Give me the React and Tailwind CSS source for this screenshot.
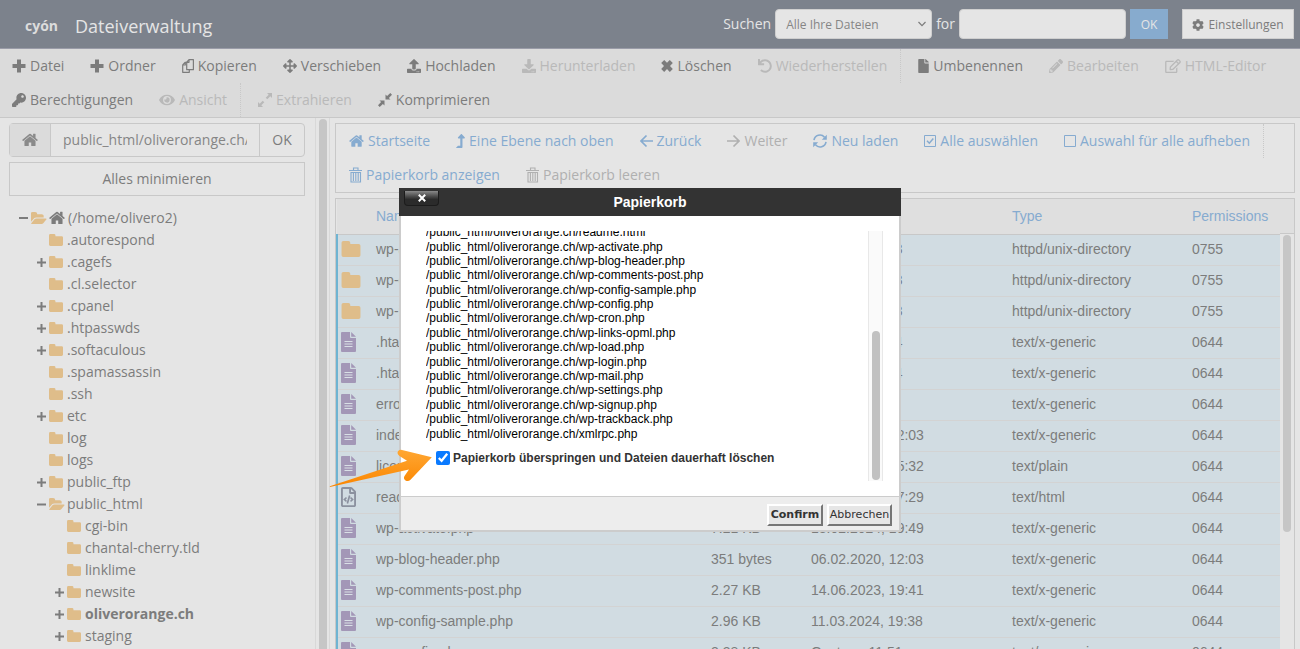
import React, { useState } from 'react';
import {
	FaArrowsAlt,
	FaCog,
	FaDownload,
	FaEye,
	FaFile,
	FaKey,
	FaLevelUpAlt,
	FaPencilAlt,
	FaRegEdit,
	FaRegFileCode,
	FaUndo,
	FaUpload,
} from 'react-icons/fa';

const Svg = ({ box = '0 0 14 14', className = 'w-3.5 h-3.5', children }) => (
	<svg viewBox={box} className={`shrink-0 ${className}`} fill="currentColor" aria-hidden="true">
		{children}
	</svg>
);

const PlusIcon = () => <Svg><path d="M5 .5h4V5h4.500v4H9v4.500H5V9H.5V5H5z" /></Svg>;

const CopyIcon = () => (
	<Svg className="w-3 h-3.5" box="0 0 12 14">
		<g fill="none" stroke="currentColor" strokeWidth="1.2" strokeLinejoin="round">
			<path d="M7 .7h4.400v10H4.700V3.200zM7 .7v2.600H4.700" />
			<path d="M4.700 3.300H3L.7 5.800v7.500h6.600v-2.500M3.300 3.500v2.500H.8" />
		</g>
	</Svg>
);

const CrossIcon = () => (
	<Svg className="w-3 h-3.5" box="0 1 12 12">
		<path d="M3.200 1 6 3.800 8.800 1l3 3L9 7l2.800 2.900-3 3L6 10.100l-2.800 2.800-3-3L3 7 .2 4z" />
	</Svg>
);

const ExtractIcon = () => (
	<Svg>
		<path d="M14 0v5l-1.700-1.700-3 3-1.600-1.600 3-3L9 0zM0 14V9l1.700 1.700 3-3 1.600 1.600-3 3L5 14z" />
	</Svg>
);

const CompressIcon = () => (
	<Svg>
		<path d="M7.500 6.500v-5l1.600 1.600L12.300 0 14 1.700l-3.100 3.200 1.600 1.600zM6.500 7.500v5l-1.600-1.600L1.700 14 0 12.300l3.100-3.200-1.600-1.600z" />
	</Svg>
);

const HomeIcon = ({ className = 'w-4 h-4' }) => (
	<Svg box="64 200 1664 1400" className={className}>
		<path d="M1472 992v480q0 26-19 45t-45 19h-384v-384h-256v384h-384q-26 0-45-19t-19-45v-480q0-1 .5-3t.5-3l575-474 575 474q1 2 1 6zm223-69l-62 74q-8 9-21 11h-3q-13 0-21-7l-692-577-692 577q-12 8-24 7-13-2-21-11l-62-74q-8-10-7-23.500t11-21.500l719-599q32-26 76-26t76 26l244 204v-195q0-14 9-23t23-9h192q14 0 23 9t9 23v408l219 182q10 8 11 21.500t-7 23.500z" />
	</Svg>
);

const ArrowIcon = ({ right }) => (
	<Svg className="w-[13px] h-3.5" box="0 0 13 14">
		<path
			d={right ? 'M0 7h12M6.500 1.500L12 7l-5.500 5.500' : 'M13 7H1M6.500 1.500L1 7l5.500 5.500'}
			fill="none"
			stroke="currentColor"
			strokeWidth="1.7"
		/>
	</Svg>
);

const RefreshIcon = () => (
	<Svg>
		<path d="M1 6.200A6 6 0 0 1 11.500 3.200M13 7.800A6 6 0 0 1 2.500 10.800" fill="none" stroke="currentColor" strokeWidth="1.6" />
		<path d="M13.800.8v5H8.800zM.2 13.200v-5h5z" />
	</Svg>
);

const BoxIcon = ({ checked }) => (
	<Svg className="w-3 h-3.5" box="0 0 12 14">
		<g fill="none" stroke="currentColor" strokeWidth="1">
			<path d="M.5 1.500h11v11H.5z" />
			{checked && <path d="M3 6.800l2.300 2.400L9.300 4.500" strokeWidth="1.500" />}
		</g>
	</Svg>
);

const TrashIcon = () => (
	<Svg className="w-[13px] h-4" box="0 0 13 16">
		<path
			d="M0 3.500h13M4.500 3V1H9v2M2 5.500h9.500V15H2zM4.400 6v8M6.800 6v8M9.200 6v8"
			fill="none"
			stroke="currentColor"
			strokeWidth="1.100"
		/>
	</Svg>
);

const FolderIcon = ({ className = 'w-3.5 h-3' }) => (
	<Svg box="64 128 1664 1408" className={`text-[#dfbd8a] ${className}`}>
		<path d="M1728 608v768q0 160-160 160h-1344q-160 0-160-160v-1088q0-160 160-160h448q160 0 160 160v96h736q160 0 160 160z" />
	</Svg>
);

const FolderOpenIcon = () => (
	<Svg box="0 128 1850 1408" className="w-4 h-3 text-[#dfbd8a]">
		<path d="M1815 952q0 31-31 66l-336 396q-43 51-120.500 86.500t-143.500 35.500h-1088q-34 0-60.500-13t-26.500-43q0-31 31-66l336-396q43-51 120.500-86.500t143.500-35.500h1088q34 0 60.500 13t26.500 43zm-343-344v160h-832q-94 0-197 47.500t-164 119.500l-337 396-5 6q0-4-.5-12.500t-.5-12.500v-960q0-92 66-158t158-66h320q92 0 158 66t66 158v32h544q92 0 158 66t66 158z" />
	</Svg>
);

const FileIcon = () => (
	<Svg box="0 0 15 20" className="w-[15px] h-5 text-[#a397b7]">
		<path d="M0 1q0-1 1-1h8v5q0 1 1 1h5v13q0 1-1 1H1q-1 0-1-1zM10.200 0 15 4.800h-4.800z" />
		<path d="M3.500 9.500h8M3.500 12h8M3.500 14.500h8" stroke="#d9dfe6" strokeWidth="1.100" />
	</Svg>
);

const ICON = 'w-3.5 h-3.5 shrink-0';

const mainActions = [
	{ label: 'Datei', icon: <PlusIcon /> },
	{ label: 'Ordner', icon: <PlusIcon /> },
	{ label: 'Kopieren', icon: <CopyIcon /> },
	{ label: 'Verschieben', icon: <FaArrowsAlt className={ICON} /> },
	{ label: 'Hochladen', icon: <FaUpload className={ICON} /> },
	{ label: 'Herunterladen', icon: <FaDownload className={ICON} />, disabled: true },
	{ label: 'Löschen', icon: <CrossIcon /> },
	{ label: 'Wiederherstellen', icon: <FaUndo className={ICON} />, disabled: true, divider: true },
	{ label: 'Umbenennen', icon: <FaFile className="w-[11px] h-3.5 shrink-0" /> },
	{ label: 'Bearbeiten', icon: <FaPencilAlt className={ICON} />, disabled: true },
	{ label: 'HTML-Editor', icon: <FaRegEdit className="w-4 h-3.5 shrink-0" />, disabled: true },
	{ label: 'Berechtigungen', icon: <FaKey className={ICON} /> },
	{ label: 'Ansicht', icon: <FaEye className="w-4 h-3.5 shrink-0" />, disabled: true, divider: true },
	{ label: 'Extrahieren', icon: <ExtractIcon />, disabled: true },
	{ label: 'Komprimieren', icon: <CompressIcon /> },
];

const navActions = [
	{ label: 'Startseite', icon: <HomeIcon className="w-[15px] h-3.5" /> },
	{ label: 'Eine Ebene nach oben', icon: <FaLevelUpAlt className="w-[9px] h-3.5 shrink-0" /> },
	{ label: 'Zurück', icon: <ArrowIcon /> },
	{ label: 'Weiter', icon: <ArrowIcon right />, disabled: true },
	{ label: 'Neu laden', icon: <RefreshIcon /> },
	{ label: 'Alle auswählen', icon: <BoxIcon checked /> },
	{ label: 'Auswahl für alle aufheben', icon: <BoxIcon />, divider: true },
	{ label: 'Papierkorb anzeigen', icon: <TrashIcon /> },
	{ label: 'Papierkorb leeren', icon: <TrashIcon />, disabled: true },
];

const tree = [
	{ name: '.autorespond' },
	{ name: '.cagefs', sign: '+' },
	{ name: '.cl.selector' },
	{ name: '.cpanel', sign: '+' },
	{ name: '.htpasswds', sign: '+' },
	{ name: '.softaculous', sign: '+' },
	{ name: '.spamassassin' },
	{ name: '.ssh' },
	{ name: 'etc', sign: '+' },
	{ name: 'log' },
	{ name: 'logs' },
	{ name: 'public_ftp', sign: '+' },
	{
		name: 'public_html',
		sign: '-',
		children: [
			{ name: 'cgi-bin' },
			{ name: 'chantal-cherry.tld' },
			{ name: 'linklime' },
			{ name: 'newsite', sign: '+' },
			{ name: 'oliverorange.ch', sign: '+', active: true },
			{ name: 'staging', sign: '+' },
		],
	},
];

const files = [
	['folder', 'wp-admin', '4 KB', 'Gestern, 11:53', 'httpd/unix-directory', '0755'],
	['folder', 'wp-content', '4 KB', 'Gestern, 11:53', 'httpd/unix-directory', '0755'],
	['folder', 'wp-includes', '12 KB', 'Gestern, 11:53', 'httpd/unix-directory', '0755'],
	['file', '.htaccess', '523 bytes', 'Gestern, 11:54', 'text/x-generic', '0644'],
	['file', '.htaccess.bk', '523 bytes', 'Gestern, 11:54', 'text/x-generic', '0644'],
	['file', 'error_log', '1.2 KB', 'Heute, 9:12', 'text/x-generic', '0644'],
	['file', 'index.php', '405 bytes', '06.02.2020, 12:03', 'text/x-generic', '0644'],
	['file', 'license.txt', '19.45 KB', '01.01.2024, 15:32', 'text/plain', '0644'],
	['html', 'readme.html', '7.24 KB', '18.06.2024, 17:29', 'text/html', '0644'],
	['file', 'wp-activate.php', '7.21 KB', '13.02.2024, 19:49', 'text/x-generic', '0644'],
	['file', 'wp-blog-header.php', '351 bytes', '06.02.2020, 12:03', 'text/x-generic', '0644'],
	['file', 'wp-comments-post.php', '2.27 KB', '14.06.2023, 19:41', 'text/x-generic', '0644'],
	['file', 'wp-config-sample.php', '2.96 KB', '11.03.2024, 19:38', 'text/x-generic', '0644'],
	['file', 'wp-config.php', '3.38 KB', 'Gestern, 11:51', 'text/x-generic', '0644'],
];

const trashed = [
	'readme.html',
	'wp-activate.php',
	'wp-blog-header.php',
	'wp-comments-post.php',
	'wp-config-sample.php',
	'wp-config.php',
	'wp-cron.php',
	'wp-links-opml.php',
	'wp-load.php',
	'wp-login.php',
	'wp-mail.php',
	'wp-settings.php',
	'wp-signup.php',
	'wp-trackback.php',
	'xmlrpc.php',
];

const Toolbar = ({ actions, color, muted }) => (
	<div className="flex flex-wrap">
		{actions.map((action) => (
			<React.Fragment key={action.label}>
				<button
					type="button"
					disabled={action.disabled}
					className={`flex h-[34px] items-center gap-1 px-[13px] whitespace-nowrap ${action.disabled ? muted : color}`}
				>
					{action.icon}
					{action.label}
				</button>
				{action.divider && <span className="mr-1 h-[34px] border-l border-dotted border-[#c8c8c8]" />}
			</React.Fragment>
		))}
	</div>
);

const TreeNode = ({ node }) => (
	<li>
		<div className={`flex h-[22px] items-center ${node.active ? 'font-bold' : ''}`}>
			<span className="flex w-3 shrink-0 items-center">
				{node.sign && (
					<Svg box="0 0 9 9" className="w-[9px] h-[9px]">
						<path d={node.sign === '+' ? 'M0 3.500h3.500V0h2v3.500H9v2H5.500V9h-2V5.500H0z' : 'M0 3.500h9v2H0z'} />
					</Svg>
				)}
			</span>
			<span className="flex w-[18px] shrink-0 items-center">
				{node.children ? <FolderOpenIcon /> : <FolderIcon />}
			</span>
			<a href="#tree">{node.name}</a>
		</div>
		{node.children && (
			<ul className="pl-[18px]">
				{node.children.map((child) => <TreeNode key={child.name} node={child} />)}
			</ul>
		)}
	</li>
);

const Header = () => (
	<header className="flex h-[49px] shrink-0 items-center justify-between border-b border-[#9a9ca8] bg-[#7c828c] pr-1.5 pl-[25px] text-[#e5e5e5]">
		<div className="flex items-center gap-[17px] pt-1">
			<span className="text-sm font-bold text-[#dcdcdc]">cyón</span>
			<h1 className="text-lg">Dateiverwaltung</h1>
		</div>
		<form className="flex items-center" onSubmit={(e) => e.preventDefault()}>
			<label htmlFor="scope" className="mr-1">Suchen</label>
			<div className="relative">
				<select
					id="scope"
					className="h-[30px] w-[157px] appearance-none rounded-sm border border-[#cfcfcf] bg-[#e5e5e5] pt-0.5 pl-2.5 text-xs text-[#858585]"
				>
					<option>Alle Ihre Dateien</option>
				</select>
				<svg viewBox="0 0 8 5" className="pointer-events-none absolute top-3 right-1.5 h-[6px] w-2" fill="none" stroke="#7c7c7c" strokeWidth="1.2">
					<path d="M.5.5 4 4.200 7.500.5" />
				</svg>
			</div>
			<label htmlFor="query" className="mx-1">for</label>
			<input id="query" type="text" className="h-[30px] w-[167px] rounded-sm border border-[#cfcfcf] bg-[#e5e5e5] px-2 text-xs" />
			<button type="submit" className="ml-1 h-[30px] w-[38px] bg-[#87abce] pt-0.5 text-xs">OK</button>
			<button
				type="button"
				className="ml-3.5 flex h-[30px] w-[112px] items-center justify-center gap-1 border border-[#cfcfcf] bg-[#e5e5e5] pt-0.5 text-xs text-[#7c7c7c]"
			>
				<FaCog className="h-3 w-3" />
				Einstellungen
			</button>
		</form>
	</header>
);

const Sidebar = () => (
	<aside className="w-[315px] shrink-0 overflow-hidden px-[9px] pt-[5px] pr-2.5">
		<form className="flex h-[34px] w-[296px] rounded-sm border border-[#c8c8c8]" onSubmit={(e) => e.preventDefault()}>
			<button type="button" aria-label="Home" className="flex w-[41px] items-center justify-center border-r border-[#c8c8c8] bg-[#dbdbdb] text-[#8a8a8a]">
				<HomeIcon className="w-4 h-3.5" />
			</button>
			<input
				type="text"
				aria-label="Pfad"
				defaultValue="public_html/oliverorange.ch/"
				className="w-0 flex-1 px-3 text-[#858585]"
			/>
			<button type="submit" className="w-[45px] border-l border-[#c8c8c8]">OK</button>
		</form>
		<button type="button" className="mt-[5px] h-[34px] w-[296px] border border-[#c8c8c8]">Alles minimieren</button>
		<div className="mt-[11px] flex h-[22px] items-center pl-2.5">
			<span className="mr-[3px] h-[2px] w-[9px] bg-[#7c7c7c]" />
			<FolderOpenIcon />
			<span className="mx-0.5"><HomeIcon className="w-4 h-3.5" /></span>
			<a href="#tree" className="pl-px">(/home/olivero2)</a>
		</div>
		<ul className="pl-7">
			{tree.map((node) => <TreeNode key={node.name} node={node} />)}
		</ul>
	</aside>
);

const FileTable = () => (
	<div className="mt-[5px] flex min-h-0 flex-1 items-start border border-b-0 border-[#c8c8c8] font-['Liberation_Sans',sans-serif]">
		<table className="w-full table-fixed text-left">
			<colgroup>
				<col className="w-[31px]" />
				<col />
				<col className="w-[100px]" />
				<col className="w-[201px]" />
				<col className="w-[180px]" />
				<col className="w-24" />
			</colgroup>
			<thead>
				<tr className="h-[35px] border-b border-[#c8c8c8] bg-[#dfdfdf] text-[#86abd0]">
					<th aria-label="Icon" />
					<th className="px-2 font-normal">Name</th>
					<th className="px-2 font-normal">Size</th>
					<th className="px-2 font-normal">Last Modified</th>
					<th className="px-2 font-normal">Type</th>
					<th className="px-2 font-normal">Permissions</th>
				</tr>
			</thead>
			<tbody>
				{files.map(([kind, ...cells]) => (
					<tr key={cells[0]} className="h-[31px] border-b border-[#d3d3d3] bg-[#d1dce2]">
						<td className="border-l-2 border-[#6fb4d2] pb-0.5 pl-[3px]">
							{kind === 'folder' && <FolderIcon className="w-5 h-4" />}
							{kind === 'file' && <FileIcon />}
							{kind === 'html' && <FaRegFileCode className="h-5 w-[15px] text-[#8b919f]" />}
						</td>
						{cells.map((cell, i) => (
							<td key={i} className="truncate px-2 pb-px">{cell}</td>
						))}
					</tr>
				))}
			</tbody>
		</table>
		<div className="w-3.5 shrink-0">
			<div className="h-[35px] border-b border-[#c8c8c8] bg-[#dfdfdf]" />
			<div className="mx-auto mt-px h-[297px] w-2 rounded-full bg-[#c6c6c6]" />
		</div>
	</div>
);

const TrashDialog = ({ onClose }) => {
	const [skipTrash, setSkipTrash] = useState(true);

	return (
		<div className="fixed inset-x-0 top-[188px] flex justify-center">
			<div
				role="dialog"
				aria-labelledby="trash-title"
				className="relative w-[502px] bg-white font-['Liberation_Sans',sans-serif] text-xs text-black"
			>
				<div className="relative flex h-7 items-center justify-center bg-[#333333] text-white">
					<button
						type="button"
						aria-label="Schliessen"
						onClick={onClose}
						className="absolute top-[3px] left-[5px] flex h-[15px] w-[35px] items-center justify-center rounded-b-sm border border-t-0 border-[#1c1c1c] bg-linear-to-b from-[#8a8a8a] to-[#2b2b2b] to-60%"
					>
						<svg viewBox="0 0 8 8" className="h-2 w-2" stroke="#fff" strokeWidth="2">
							<path d="M.8.8l6.400 6.400M7.200.8.8 7.200" />
						</svg>
					</button>
					<h2 id="trash-title" className="text-sm font-bold">Papierkorb</h2>
				</div>
				<div className="border-x-2 border-b-2 border-[#cccccc]">
					<div className="flex h-[280px] py-[15px] pr-4 pl-[25px]">
						<div className="flex flex-1 flex-col justify-end overflow-hidden">
							<ul className="shrink-0 leading-[1.2]">
								{trashed.map((name) => <li key={name}>/public_html/oliverorange.ch/{name}</li>)}
							</ul>
							<label className="mt-[9px] mb-[15px] flex h-4 shrink-0 items-center gap-[3px] pl-2.5 font-bold text-[#333333]">
								<input
									type="checkbox"
									checked={skipTrash}
									onChange={(e) => setSkipTrash(e.target.checked)}
									className="h-3.5 w-3.5 accent-[#0a7aff]"
								/>
								Papierkorb überspringen und Dateien dauerhaft löschen
							</label>
						</div>
						<div className="flex w-[15px] flex-col justify-end border-x border-[#e8e8e8] bg-[#fafafa] pb-px">
							<div className="mx-auto h-[149px] w-2 rounded-full bg-[#c1c1c1]" />
						</div>
					</div>
					<div className="flex h-[34px] items-center justify-end gap-1 border-t border-[#cccccc] bg-[#ededed] pt-0.5 pr-[7px] font-['DejaVu_Sans',sans-serif] text-[11px] text-[#333333]">
						<button type="button" onClick={onClose} className="h-[22px] w-14 border-2 border-t-white border-r-[#767676] border-b-[#767676] border-l-white bg-[#e6e6e6] pt-px font-bold">
							Confirm
						</button>
						<button type="button" onClick={onClose} className="h-[22px] w-[65px] border-2 border-t-white border-r-[#767676] border-b-[#767676] border-l-white bg-[#e6e6e6] pt-px">
							Abbrechen
						</button>
					</div>
				</div>
				{/* Pointer to the checkbox, drawn over the dialog edge */}
				<svg viewBox="0 0 104 40" className="pointer-events-none absolute top-[259px] -left-[70px] h-10 w-[104px]">
					<defs>
						<linearGradient id="pointer" x1="0" y1="0" x2="0" y2="1">
							<stop offset="0" stopColor="#ffa733" />
							<stop offset="1" stopColor="#fb8600" />
						</linearGradient>
					</defs>
					<path
						fill="url(#pointer)"
						d="M.8 39.200 78 13.800 70.500 9Q67.500 6.500 69 4.200 70.200 2.500 73 2.900L102.800 10.300 81.500 32.800Q79.200 35 76.500 33.500 74 31.500 75.500 29L80 22.500.9 40z"
					/>
				</svg>
			</div>
		</div>
	);
};

const App = () => {
	const [dialogOpen, setDialogOpen] = useState(true);

	return (
		<div className="flex h-screen flex-col overflow-hidden bg-[#e5e5e5] font-['Open_Sans',sans-serif] text-sm text-[#7c7c7c]">
			<Header />
			<nav className="shrink-0 border-b border-[#c8c8c8] bg-[#dbdbdb]">
				<div className="-ml-px">
					<Toolbar actions={mainActions} color="text-[#7c7c7c]" muted="text-[#b9b9b9]" />
				</div>
			</nav>
			<main className="flex min-h-0 flex-1">
				<Sidebar />
				<div className="w-[15px] shrink-0 border-x border-[#d8d8d8] pt-px">
					<div className="mx-auto h-full w-2 rounded-t-full bg-[#c6c6c6]" />
				</div>
				<section className="flex min-w-0 flex-1 flex-col px-[5px] pt-[5px]">
					<div className="shrink-0 border border-[#c8c8c8]">
						<Toolbar actions={navActions} color="text-[#86abd0]" muted="text-[#b0b0b0]" />
					</div>
					<FileTable />
				</section>
			</main>
			{dialogOpen && <TrashDialog onClose={() => setDialogOpen(false)} />}
		</div>
	);
};

export default App;
